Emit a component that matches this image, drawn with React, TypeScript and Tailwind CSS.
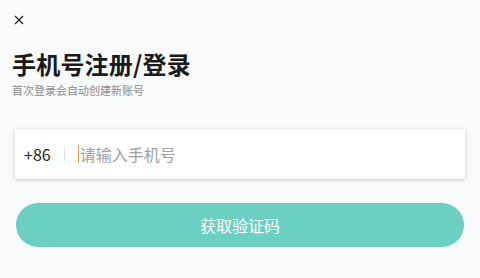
export default function App() {
  const font = { fontFamily: '"Noto Sans CJK SC", "Noto Sans", sans-serif' };
  return (
    <div className="w-[480px] h-[278px] bg-[#f9fafc] overflow-hidden" style={font}>
      <div className="pl-[14px] pt-[15px] h-[26px]">
        <svg width="10" height="10" viewBox="0 0 10 10" className="block">
          <path d="M1 1 L9 9 M9 1 L1 9" stroke="#222" strokeWidth="1.2" fill="none" />
        </svg>
      </div>
      <h1 className="mt-[22px] ml-[12px] text-[24px] leading-[32px] font-bold text-[#1a1a1a] tracking-[0.2px]">
        手机号注册/登录
      </h1>
      <p className="ml-[12px] mt-[2px] text-[11px] leading-[16px] text-[#8a8a8a]">首次登录会自动创建新账号</p>
      <div className="mt-[31px] ml-[15px] w-[450px] h-[50px] bg-white flex items-center shadow-[0_1px_4px_rgba(0,0,0,0.22)]">
        <span className="ml-[9px] text-[16px] text-[#1f1f1f] leading-none">+86</span>
        <span className="ml-[13px] w-px h-[13px] bg-[#dedede]" />
        <span className="ml-[13px] w-px h-[18px] bg-[#e0a050]" />
        <span className="ml-px text-[16px] text-[#a0a0a0] leading-none">请输入手机号</span>
      </div>
      <button className="mt-[24px] ml-[16px] w-[448px] h-[44px] rounded-full bg-[#6bcfc2] text-white text-[16px] flex items-center justify-center">
        获取验证码
      </button>
    </div>
  );
}
